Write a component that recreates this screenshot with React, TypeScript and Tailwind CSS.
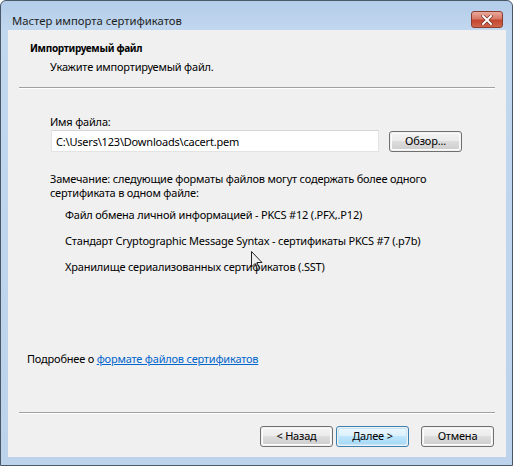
import React from "react";

const font = { fontFamily: '"Noto Sans", "Segoe UI", sans-serif' };

function WinButton({ label, primary }: { label: string; primary?: boolean }) {
  return (
    <div
      className={
        "w-[73px] h-[21px] rounded-[3px] border p-px " +
        (primary ? "border-[#3c7fb1]" : "border-[#707070]")
      }
    >
      <div
        className={
          "h-full w-full rounded-[2px] flex items-center justify-center text-[11px] tracking-[-0.2px] text-black " +
          (primary
            ? "bg-[linear-gradient(#eaf6fd_0%,#d9f0fc_50%,#bee6fd_50%,#a7d9f5_100%)] border border-[#c5e6f9]"
            : "bg-[linear-gradient(#f2f2f2_0%,#ebebeb_50%,#dddddd_50%,#cfcfcf_100%)] border border-[#fcfcfc]")
        }
      >
        {label}
      </div>
    </div>
  );
}

export default function App() {
  return (
    <div className="w-[513px] h-[466px] overflow-hidden bg-white" style={font}>
      <div className="relative w-[513px] h-[466px] border border-[#4a5766] rounded-t-[6px] bg-[linear-gradient(#b3cce8_0px,#c2d8ef_30px,#bdd3ec_100%)] flex flex-col">
        {/* Title bar */}
        <div className="h-[29px] flex items-start justify-between pl-[11px] pr-[9px]">
          <span className="mt-[12px] text-[11.3px] leading-[15px] text-[#1e1e1e]">Мастер импорта сертификатов</span>
          <div className="mt-[10px] w-[32px] h-[17px] rounded-[3px] border border-[#8d3d30] bg-[linear-gradient(#e9a99b_0%,#d77a66_45%,#c4462f_55%,#d0664d_100%)] flex items-center justify-center">
            <svg width="12" height="10" viewBox="0 0 12 10">
              <path d="M2 1 L10 9 M10 1 L2 9" stroke="#6a2a20" strokeWidth="3.2" strokeLinecap="square" />
              <path d="M2 1 L10 9 M10 1 L2 9" stroke="#ffffff" strokeWidth="2" strokeLinecap="square" />
            </svg>
          </div>
        </div>
        {/* Client area */}
        <div className="flex-1 ml-[7px] mr-[6px] mb-[8px] bg-[#f0f0f0] flex flex-col text-[11px] tracking-[-0.2px] text-black">
          <div className="pl-[22px] pt-[11px] leading-[15px] font-bold text-[10px] tracking-[-0.3px]">Импортируемый файл</div>
          <div className="pl-[42px] mt-[3px] leading-[15px]">Укажите импортируемый файл.</div>
          <div className="mx-[11px] mt-[13px] h-[2px] border-t border-[#a0a0a0] border-b border-b-white" />
          <div className="pl-[42px] mt-[25px] leading-[15px]">Имя файла:</div>
          <div className="flex items-center pl-[43px] mt-[1px]">
            <div className="w-[328px] h-[22px] bg-white border border-[#e3e3e3] border-t-[#d6d6d6] flex items-center pl-[4px] leading-[15px]">
              C:\Users\123\Downloads\cacert.pem
            </div>
            <div className="ml-[10px]">
              <WinButton label="Обзор..." />
            </div>
          </div>
          <div className="pl-[42px] mt-[20px] leading-[14px]">
            Замечание: следующие форматы файлов могут содержать более одного
            <br />
            сертификата в одном файле:
          </div>
          <div className="pl-[57px] mt-[7px] flex flex-col gap-[11px] leading-[15px]">
            <div>Файл обмена личной информацией - PKCS #12 (.PFX,.P12)</div>
            <div>Стандарт Cryptographic Message Syntax - сертификаты PKCS #7 (.p7b)</div>
            <div>Хранилище сериализованных сертификатов (.SST)</div>
          </div>
          <div className="flex-1" />
          <div className="pl-[19px] leading-[15px]">
            Подробнее о{" "}
            <span className="text-[#0066cc] underline underline-offset-1">формате файлов сертификатов</span>
          </div>
          <div className="mx-[11px] mt-[46px] h-[2px] border-t border-[#a0a0a0] border-b border-b-white" />
          <div className="flex justify-end pr-[12px] mt-[12px] mb-[10px]">
            <WinButton label="< Назад" />
            <div className="ml-[3px]">
              <WinButton label="Далее >" primary />
            </div>
            <div className="ml-[12px]">
              <WinButton label="Отмена" />
            </div>
          </div>
        </div>
        {/* mouse cursor overlay */}
        <svg className="absolute left-[250px] top-[250px]" width="14" height="20" viewBox="0 0 14 20">
          <path d="M0.5 0.5 L0.5 16 L4 12.5 L6.5 18.5 L8.5 17.5 L6 11.5 L11 11.5 Z" fill="#f0f0f0" fillOpacity="0.4" stroke="#222" strokeWidth="1" />
        </svg>
      </div>
    </div>
  );
}
